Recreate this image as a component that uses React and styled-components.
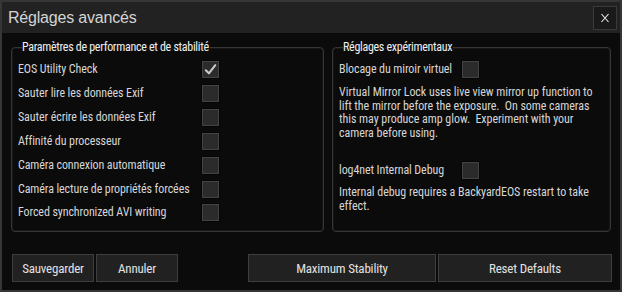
import React from "react";
import styled, { createGlobalStyle } from "styled-components";

const GlobalStyle = createGlobalStyle`
  html, body {
    margin: 0;
    padding: 0;
    background: #0a0a0a;
  }
  * { box-sizing: border-box; }
`;

const NARROW = `"Roboto Condensed", Roboto, "Liberation Sans", sans-serif`;

const Window = styled.div`
  width: 622px;
  height: 292px;
  border: 2px solid #363636;
  background: #0b0b0b;
  display: flex;
  flex-direction: column;
  font-family: ${NARROW};
  font-stretch: 75%;
  color: #d6d6d6;
`;

const TitleBar = styled.div`
  height: 31px;
  flex: none;
  background: #222222;
  display: flex;
  align-items: center;
  justify-content: space-between;
  padding: 0 3px 0 6px;
`;

const Title = styled.h1`
  margin: 0;
  font-family: "Liberation Sans", Arial, sans-serif;
  font-stretch: normal;
  font-weight: normal;
  font-size: 16px;
  letter-spacing: -0.2px;
  color: #d4d4d4;
`;

const CloseButton = styled.button`
  width: 24px;
  height: 24px;
  padding: 0;
  background: #1a1a1a;
  border: 1px solid #3a3a3a;
  display: flex;
  align-items: center;
  justify-content: center;
`;

const Body = styled.div`
  flex: 1;
  display: flex;
  flex-direction: column;
  padding: 7px 8px 8px 9px;
`;

const Groups = styled.div`
  display: grid;
  grid-template-columns: 313px 279px;
  column-gap: 8px;
  height: 192px;
`;

const Group = styled.fieldset`
  margin: 0;
  padding: 3px 6px 0 6px;
  min-width: 0;
  border: 1px solid #353535;
  border-radius: 4px;
  box-shadow: inset 0 0 0 1px #161616;
`;

const Legend = styled.legend`
  padding: 0 1px 0 0;
  margin-left: 4px;
  font-size: 12px;
  line-height: 14px;
  letter-spacing: -0.3px;
  color: #efefef;
`;

const Row = styled.div`
  display: grid;
  grid-template-columns: ${(p) => p.$label}px 17px;
  align-items: center;
  height: ${(p) => (p.$tight ? 22 : 24)}px;
  margin-top: ${(p) => p.$top || 0}px;
  font-size: 12px;
  letter-spacing: -0.1px;
  white-space: nowrap;
`;

const Box = styled.div`
  width: 17px;
  height: 17px;
  background: #2b2b2b;
  border: 1px solid #444444;
  box-shadow: 0 0 0 1px #050505;
  display: flex;
  align-items: center;
  justify-content: center;
`;

const Note = styled.p`
  margin: ${(p) => p.$top}px 0 0 0;
  font-size: 12px;
  line-height: 13.5px;
  letter-spacing: -0.05px;
  white-space: nowrap;
  color: #d6d6d6;
`;

const Footer = styled.div`
  margin-top: 22px;
  display: flex;
  gap: 2px;
  padding-left: 1px;
`;

const Spacer = styled.div`
  flex: 1;
`;

const Button = styled.button`
  width: ${(p) => p.$w}px;
  height: 28px;
  background: #212121;
  border: 1px solid #3e3e3e;
  color: #e2e2e2;
  font-family: ${NARROW};
  font-stretch: 75%;
  letter-spacing: -0.2px;
  font-size: 13px;
  padding: 0;
`;

function Check({ checked }) {
  return (
    <Box>
      {checked && (
        <svg width="15" height="15" viewBox="0 0 15 15">
          <path d="M2.8 8.3 L5.9 11.3 L12.3 3.2" fill="none" stroke="#c9c9c9" strokeWidth="2.1" strokeLinecap="round" strokeLinejoin="round" />
        </svg>
      )}
    </Box>
  );
}

const perf = [
  ["EOS Utility Check", true],
  ["Sauter lire les données Exif", false],
  ["Sauter écrire les données Exif", false],
  ["Affinité du processeur", false],
  ["Caméra connexion automatique", false],
  ["Caméra lecture de propriétés forcées", false],
  ["Forced synchronized AVI writing", false],
];

export default function App() {
  return (
    <>
      <GlobalStyle />
      <Window>
        <TitleBar>
          <Title>Réglages avancés</Title>
          <CloseButton aria-label="Fermer">
            <svg width="12" height="12" viewBox="0 0 12 12">
              <path d="M2.5 2 L9.5 10 M9.5 2 L2.5 10" stroke="#e8e8e8" strokeWidth="1.1" />
            </svg>
          </CloseButton>
        </TitleBar>
        <Body>
          <Groups>
            <Group>
              <Legend>Paramètres de performance et de stabilité</Legend>
              {perf.map(([label, checked], i) => (
                <Row key={label} $label={184} $tight={i === perf.length - 1}>
                  <span>{label}</span>
                  <Check checked={checked} />
                </Row>
              ))}
            </Group>
            <Group>
              <Legend>Réglages expérimentaux</Legend>
              <Row $label={123}>
                <span>Blocage du miroir virtuel</span>
                <Check />
              </Row>
              <Note $top={5}>
                Virtual Mirror Lock uses live view mirror up function to<br />
                lift the mirror before the exposure.&nbsp; On some cameras<br />
                this may produce amp glow.&nbsp; Experiment with your<br />
                camera before using.
              </Note>
              <Row $label={123} $top={18}>
                <span>log4net Internal Debug</span>
                <Check />
              </Row>
              <Note $top={4}>
                Internal debug requires a BackyardEOS restart to take<br />
                effect.
              </Note>
            </Group>
          </Groups>
          <Footer>
            <Button $w={82}>Sauvegarder</Button>
            <Button $w={82}>Annuler</Button>
            <Spacer />
            <Button $w={188}>Maximum Stability</Button>
            <Button $w={174}>Reset Defaults</Button>
          </Footer>
        </Body>
      </Window>
    </>
  );
}
